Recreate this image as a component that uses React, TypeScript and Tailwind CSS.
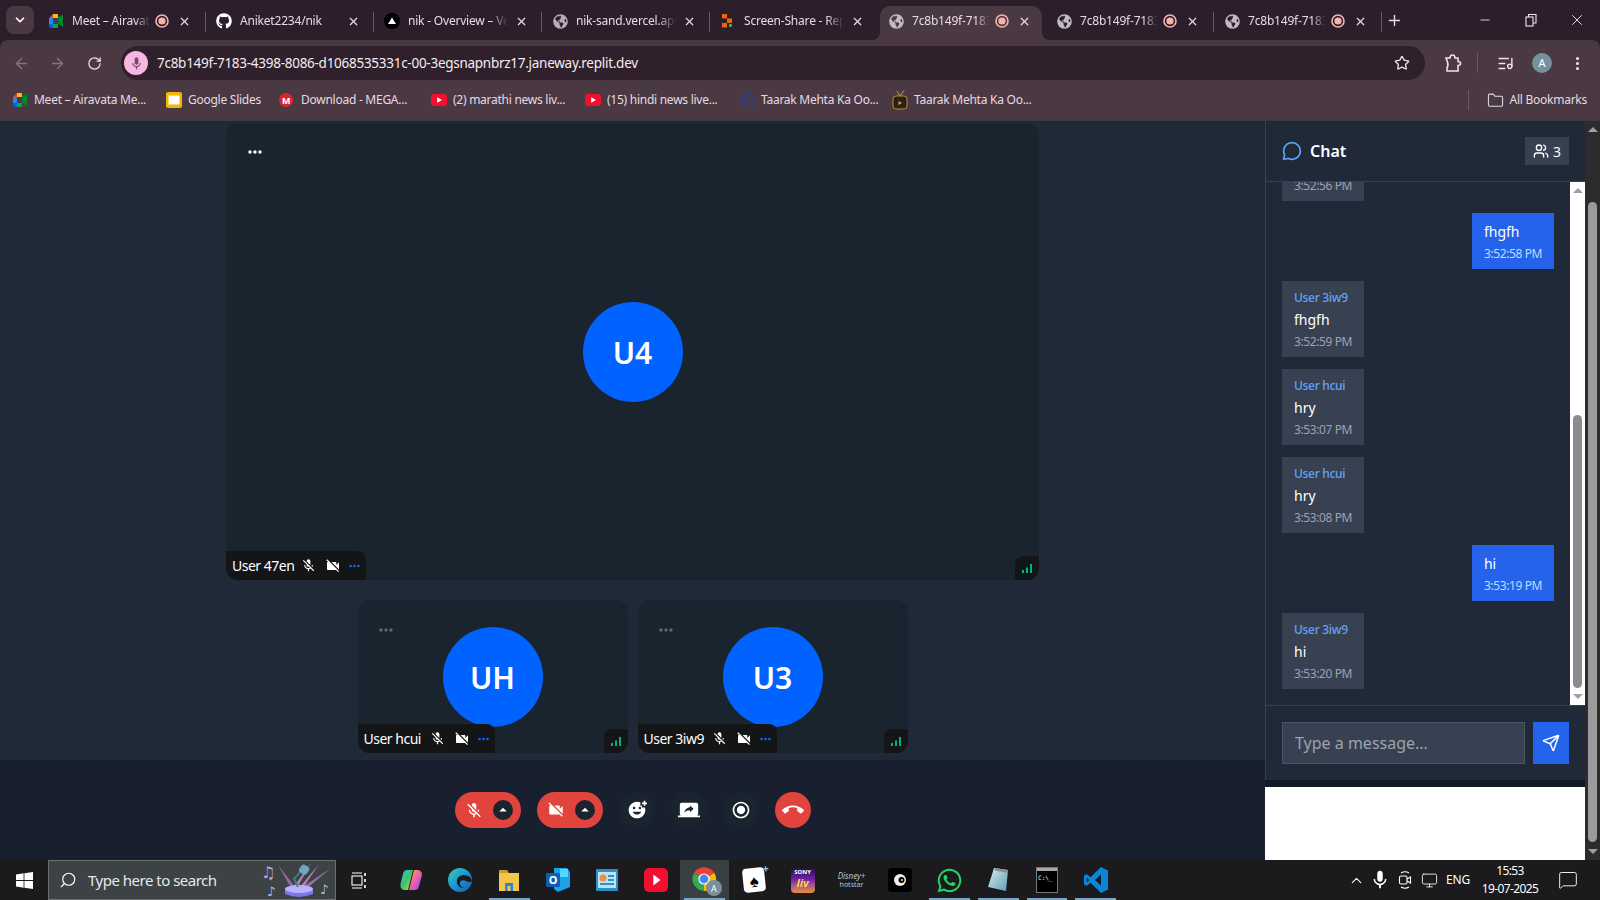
import React from 'react';
import {
  ArrowLeft,
  ArrowRight,
  ChevronDown,
  ChevronUp,
  Folder,
  ListMusic,
  MessageCircle,
  MessageSquare,
  Minus,
  Monitor,
  MoreVertical,
  Plus,
  RotateCw,
  Search,
  Send,
  Star,
  Users,
  X,
} from 'lucide-react';
import { FaGithub, FaGlobeAmericas, FaWhatsapp } from 'react-icons/fa';
import {
  MdAddReaction,
  MdArrowDropUp,
  MdCallEnd,
  MdMic,
  MdMicOff,
  MdRadioButtonChecked,
  MdScreenShare,
  MdVideocamOff,
} from 'react-icons/md';

const uiFont = "font-['Noto_Sans','Open_Sans',sans-serif]";

// ---- little logos ----

function MeetIcon({ size = 16 }: { size?: number }) {
  return (
    <svg width={size} height={size} viewBox="0 0 16 16">
      <path d="M1 5 L5 1 H10 V5 H5 V11 H1 Z" fill="#ea4335" />
      <path d="M5 1 H10 V5 H5 Z" fill="#fbbc04" />
      <path d="M1 5 H5 V11 H1 Z" fill="#2684fc" />
      <path d="M1 11 H5 V15 H3 Q1 15 1 13 Z" fill="#0066da" />
      <path d="M5 11 H10 V15 H5 Z" fill="#00ac47" />
      <path d="M10 4 L15 1.5 V14 L10 11 Z" fill="#00832d" />
      <path d="M5 5 H10 V11 H5 Z" fill="#4a3843" />
    </svg>
  );
}

function VercelIcon() {
  return (
    <svg width="16" height="16" viewBox="0 0 16 16">
      <circle cx="8" cy="8" r="8" fill="#000" />
      <path d="M8 4.5 L12 11 H4 Z" fill="#fff" />
    </svg>
  );
}

function ReplitIcon() {
  return (
    <svg width="16" height="16" viewBox="0 0 16 16">
      <rect x="2" y="1" width="5" height="4.5" fill="#f26207" />
      <rect x="7" y="5.5" width="5" height="4.5" fill="#f26207" />
      <rect x="2" y="10" width="5" height="4.5" fill="#f26207" />
      <rect x="9" y="11" width="3" height="3" rx="1" fill="#3fb950" />
    </svg>
  );
}

function RecIcon() {
  return (
    <svg width="14" height="14" viewBox="0 0 14 14">
      <circle cx="7" cy="7" r="6" fill="none" stroke="#f8b4ac" strokeWidth="1.6" />
      <circle cx="7" cy="7" r="3.6" fill="#f8b4ac" />
    </svg>
  );
}

function YoutubeIcon({ w = 16, h = 12 }: { w?: number; h?: number }) {
  return (
    <svg width={w} height={h} viewBox="0 0 16 12" preserveAspectRatio="none">
      <rect width="16" height="12" rx="3" fill="#f50f2f" />
      <path d="M6.2 3.2 L11 6 L6.2 8.8 Z" fill="#fff" />
    </svg>
  );
}

function SlidesIcon() {
  return (
    <svg width="16" height="16" viewBox="0 0 16 16">
      <rect width="16" height="16" rx="2" fill="#f4b400" />
      <rect x="2.5" y="3.5" width="11" height="9" fill="#fff" />
    </svg>
  );
}

function MegaIcon() {
  return (
    <span className="flex h-[14px] w-[14px] items-center justify-center rounded-full bg-[#d9272e] text-[9px] font-bold leading-none text-white">
      M
    </span>
  );
}

function TempleIcon() {
  return (
    <svg width="16" height="18" viewBox="0 0 16 18" fill="none" stroke="#27408f" strokeWidth="1.1">
      <path d="M1 7 L8 1 L15 7" />
      <path d="M3 7 V17 M6 5 V17 M10 5 V17 M13 7 V17" />
    </svg>
  );
}

function TvIcon() {
  return (
    <svg width="16" height="20" viewBox="0 0 16 20">
      <path d="M5 1 L8 6 L12 0.5" stroke="#c08a2c" strokeWidth="1.2" fill="none" />
      <rect x="1" y="6" width="14" height="13" rx="3" fill="#2a2118" stroke="#c08a2c" />
      <path d="M6.5 11 L10 13 L6.5 15 Z" fill="#e0a030" />
    </svg>
  );
}

function PuzzleIcon() {
  return (
    <svg width="18" height="20" viewBox="0 0 18 20" fill="none" stroke="#f1dfe8" strokeWidth="1.6">
      <path d="M2 5 H6 Q6 2 8.5 2 Q11 2 11 5 H14 V8.5 Q16.5 8.5 16.5 10.5 Q16.5 12.5 14 12.5 V18 H3 V15 Q4.5 13 3.5 9 Z" />
    </svg>
  );
}

function WindowsLogo() {
  return (
    <svg width="17" height="17" viewBox="0 0 17 17" fill="#fff">
      <path d="M0 2.4 L7.6 1.3 V8 H0 Z" />
      <path d="M8.4 1.2 L17 0 V8 H8.4 Z" />
      <path d="M0 9 H7.6 V15.7 L0 14.6 Z" />
      <path d="M8.4 9 H17 V17 L8.4 15.8 Z" />
    </svg>
  );
}

function SearchArt() {
  return (
    <svg width="72" height="36" viewBox="0 0 72 36">
      <path d="M17 3 L30 26 L35 26 Z" fill="#a16fb0" opacity="0.85" />
      <path d="M58 2 L42 26 L38 26 Z" fill="#c487c4" opacity="0.9" />
      <path d="M70 6 L44 28 L40 26 Z" fill="#b073b6" opacity="0.85" />
      <path d="M50 1 L36 26 L33 24 Z" fill="#d39ad0" opacity="0.75" />
      <path d="M24 27 Q38 33 52 27 V32 Q38 38 24 32 Z" fill="#7a78f0" />
      <ellipse cx="38" cy="27" rx="14" ry="4" fill="#b9b4ff" />
      <path d="M37 25 L33 17 L40 9" stroke="#3f7f8c" strokeWidth="1.8" fill="none" />
      <rect x="39" y="3" width="9" height="9" rx="3" transform="rotate(35 43 7)" fill="#6fa6bd" />
      <text x="0" y="16" fontSize="16" fill="#c6a2e8" fontFamily="DejaVu Sans">♫</text>
      <text x="6" y="34" fontSize="13" fill="#a7c0f0" fontFamily="DejaVu Sans">♪</text>
      <text x="59" y="32" fontSize="13" fill="#a7c0f0" fontFamily="DejaVu Sans">♪</text>
    </svg>
  );
}

function CopilotIcon() {
  return (
    <svg width="24" height="24" viewBox="0 0 24 24">
      <defs>
        <linearGradient id="cpa" x1="0" y1="0" x2="1" y2="1">
          <stop offset="0" stopColor="#36c0e8" />
          <stop offset="0.5" stopColor="#36c46c" />
          <stop offset="1" stopColor="#f3d23a" />
        </linearGradient>
        <linearGradient id="cpb" x1="0" y1="0" x2="1" y2="1">
          <stop offset="0" stopColor="#ffb347" />
          <stop offset="0.5" stopColor="#ef5da8" />
          <stop offset="1" stopColor="#6a5cf0" />
        </linearGradient>
      </defs>
      <path d="M8 2 H14 L9 22 H6 Q1 22 1.5 16 L4 6 Q5 2 8 2 Z" fill="url(#cpa)" />
      <path d="M10 22 H16 Q19 22 20 18 L23 7 Q23 2 18 2 H15 Z" fill="url(#cpb)" />
    </svg>
  );
}

function EdgeIcon() {
  return (
    <svg width="24" height="24" viewBox="0 0 24 24">
      <defs>
        <linearGradient id="edg" x1="0" y1="0" x2="1" y2="1">
          <stop offset="0" stopColor="#36d1b0" />
          <stop offset="0.55" stopColor="#1a8fd8" />
          <stop offset="1" stopColor="#0b5fa8" />
        </linearGradient>
      </defs>
      <circle cx="12" cy="12" r="12" fill="url(#edg)" />
      <path d="M24 13 Q23 7 15 7 Q8 8 9 15 Q10 20 16 20 Q11 18 12 14 Q14 11 18 13 Q21 15 24 13 Z" fill="#1b1a1c" />
    </svg>
  );
}

function ExplorerIcon() {
  return (
    <svg width="22" height="24" viewBox="0 0 22 24">
      <path d="M1 2 H9 L11 5 H1 Z" fill="#c99a2e" />
      <rect x="1" y="5" width="20" height="18" fill="#f4c64a" />
      <path d="M7 23 V15 H15 V23 H12.5 V18 H9.5 V23 Z" fill="#2b86d9" />
    </svg>
  );
}

function OutlookIcon() {
  return (
    <svg width="24" height="26" viewBox="0 0 24 26">
      <path d="M8 1 H21 L24 5 V20 L12 25 L8 22 Z" fill="#1aa3e8" />
      <path d="M14 2 H22 V10 H14 Z" fill="#50d9ff" />
      <rect x="0" y="6" width="14" height="14" rx="1" fill="#0f5db5" />
      <text x="7" y="17" fontSize="11" fontWeight="700" fill="#fff" textAnchor="middle" fontFamily="Noto Sans">O</text>
    </svg>
  );
}

function WidgetsIcon() {
  return (
    <svg width="22" height="22" viewBox="0 0 22 22">
      <rect width="22" height="22" rx="1" fill="#2f8fc7" />
      <rect x="2" y="3" width="18" height="16" fill="#bfe3f5" />
      <circle cx="7" cy="9" r="3.5" fill="#e8903c" />
      <rect x="12" y="6" width="6" height="2" fill="#2f8fc7" />
      <rect x="12" y="10" width="6" height="2" fill="#2f8fc7" />
      <rect x="4" y="14" width="14" height="2" fill="#2f8fc7" />
    </svg>
  );
}

function ChromeIcon() {
  return (
    <span className="relative block h-[26px] w-[26px]">
      <svg width="24" height="24" viewBox="0 0 24 24">
        <path d="M12 12 L2 6 A12 12 0 0 1 22.4 6 Z" fill="#ea4335" />
        <path d="M12 12 L22.4 6 A12 12 0 0 1 12 24 Z" fill="#fbbc04" />
        <path d="M12 12 L12 24 A12 12 0 0 1 2 6 Z" fill="#34a853" />
        <circle cx="12" cy="12" r="5.6" fill="#fff" />
        <circle cx="12" cy="12" r="4.4" fill="#4285f4" />
      </svg>
      <span className="absolute bottom-[-3px] right-[-4px] flex h-4 w-4 items-center justify-center rounded-full bg-[#78909c] text-[9px] leading-none text-white">
        A
      </span>
    </span>
  );
}

function SolitaireIcon() {
  return (
    <span className="relative flex h-[24px] w-[22px] rotate-[-6deg] items-center justify-center rounded-sm bg-white text-[17px] leading-none text-black">
      ♠
      <span className="absolute right-[-5px] top-[-4px] text-[11px] font-bold leading-none text-[#7fd0f5]">+</span>
    </span>
  );
}

function SonyLivIcon() {
  return (
    <span className="flex h-[26px] w-[24px] flex-col items-center overflow-hidden rounded-sm bg-gradient-to-b from-[#1a1040] via-[#7a1fa8] to-[#f08a24] text-white">
      <span className="text-[6px] font-bold leading-[10px]">SONY</span>
      <span className="text-[11px] font-bold italic leading-[12px] text-[#ffd23f]">liv</span>
    </span>
  );
}

function HotstarIcon() {
  return (
    <span className="flex flex-col items-center text-[#b9c3cc]">
      <span className="text-[8px] italic leading-[9px]">Disney+</span>
      <span className="text-[7px] leading-[9px]">hotstar</span>
    </span>
  );
}

function CrunchIcon() {
  return (
    <span className="flex h-[24px] w-[24px] items-center justify-center rounded-[4px] bg-black">
      <svg width="14" height="14" viewBox="0 0 14 14">
        <circle cx="7" cy="7" r="6" fill="#eee" />
        <circle cx="8.5" cy="7" r="3" fill="#000" />
        <circle cx="9" cy="7" r="1.2" fill="#e8903c" />
      </svg>
    </span>
  );
}

function NotepadIcon() {
  return (
    <svg width="24" height="26" viewBox="0 0 24 26">
      <defs>
        <linearGradient id="npd" x1="0" y1="0" x2="1" y2="1">
          <stop offset="0" stopColor="#d8ecef" />
          <stop offset="1" stopColor="#5f9fb5" />
        </linearGradient>
      </defs>
      <path d="M8 1 L22 3 L20 24 L2 20 Z" fill="url(#npd)" />
      <path d="M9 1 L22 3 L21.6 6 L8.6 3.6 Z" fill="#8b8f92" />
    </svg>
  );
}

function TerminalIcon() {
  return (
    <span className="flex h-[26px] w-[22px] flex-col overflow-hidden border border-[#777] bg-black font-['DejaVu_Sans_Mono',monospace] text-[6px] leading-[10px] text-white">
      <span className="h-[3px] bg-[#aaa]" />
      <span className="pl-[1px] pt-[2px]">C:\_</span>
    </span>
  );
}

function VscodeIcon() {
  return (
    <svg width="24" height="26" viewBox="0 0 24 26">
      <path d="M17 0 L24 3.5 V22.5 L17 26 L6.5 15.8 L2.5 19 L0 17.5 V8.5 L2.5 7 L6.5 10.2 Z M17 7.5 L11 13 L17 18.5 Z M2.8 10.4 V15.6 L5.4 13 Z" fill="#0a86d8" fillRule="evenodd" />
    </svg>
  );
}

function TrayCamera() {
  return (
    <svg width="14" height="20" viewBox="0 0 14 20" fill="none" stroke="#fff" strokeWidth="1.1">
      <path d="M3 3 Q7 0.5 11 3" />
      <rect x="1.5" y="6" width="7.5" height="8" rx="1.5" />
      <path d="M9 9 L12.5 7 V13 L9 11" />
      <path d="M3 17 Q7 19.5 11 17" />
    </svg>
  );
}

function Dots({ className = '', width = 14 }: { className?: string; width?: number }) {
  return (
    <svg width={width} height="4" viewBox="0 0 14 4" className={className} fill="currentColor">
      <circle cx="2" cy="2" r="1.7" />
      <circle cx="7" cy="2" r="1.7" />
      <circle cx="12" cy="2" r="1.7" />
    </svg>
  );
}

// ---- browser chrome ----

type TabInfo = {
  title: string;
  icon: React.ReactNode;
  rec?: boolean;
  active?: boolean;
  noSep?: boolean;
};

const tabs: TabInfo[] = [
  { title: 'Meet – Airavata Meet', icon: <MeetIcon />, rec: true },
  { title: 'Aniket2234/nik', icon: <FaGithub size={16} color="#fff" /> },
  { title: 'nik - Overview – Vercel', icon: <VercelIcon /> },
  { title: 'nik-sand.vercel.app', icon: <FaGlobeAmericas size={15} color="#b9adb5" /> },
  { title: 'Screen-Share - Replit', icon: <ReplitIcon />, noSep: true },
  { title: '7c8b149f-7183-4398', icon: <FaGlobeAmericas size={15} color="#c4bac2" />, rec: true, active: true },
  { title: '7c8b149f-7183-4398', icon: <FaGlobeAmericas size={15} color="#c4bac2" />, rec: true },
  { title: '7c8b149f-7183-4398', icon: <FaGlobeAmericas size={15} color="#c4bac2" />, rec: true },
];

function Tab({ tab }: { tab: TabInfo }) {
  const inner = (
    <>
      <span className="flex w-4 shrink-0 justify-center">{tab.icon}</span>
      <span
        className={`ml-2 overflow-hidden whitespace-nowrap text-[12px] tracking-[-0.2px] text-[#e6dbe2] [mask-image:linear-gradient(to_right,black_82%,transparent)] ${
          tab.rec ? 'w-[78px]' : 'w-[100px]'
        }`}
      >
        {tab.title}
      </span>
      {tab.rec && (
        <span className="ml-[2px] flex w-[19px] justify-center">
          <RecIcon />
        </span>
      )}
      <X size={13} strokeWidth={2.2} className="ml-[7px] shrink-0 text-[#e6dbe2]" />
    </>
  );

  if (tab.active) {
    return (
      <div className="relative mr-[6px] flex h-[34px] w-[162px] items-center rounded-t-[10px] bg-[#4a3843] pb-1 pl-2">
        <span className="absolute bottom-0 left-[-8px] h-2 w-2 bg-[radial-gradient(circle_at_0_0,transparent_8px,#4a3843_8px)]" />
        <span className="absolute bottom-0 right-[-8px] h-2 w-2 bg-[radial-gradient(circle_at_100%_0,transparent_8px,#4a3843_8px)]" />
        {inner}
      </div>
    );
  }
  return (
    <div className="relative flex h-[34px] w-[168px] items-center pb-1 pl-2">
      {inner}
      {!tab.noSep && <span className="absolute right-[2px] top-[6px] h-5 w-px bg-[#6a5964]" />}
    </div>
  );
}

function TabStrip() {
  return (
    <div className="flex h-10 items-start bg-[#2c1e2b]">
      <div className="ml-[6px] mr-[6px] mt-[6px] flex h-7 w-7 items-center justify-center rounded-lg bg-[#4a3843]">
        <ChevronDown size={14} strokeWidth={3} color="#fff" />
      </div>
      <div className="flex pt-[6px]">
        {tabs.map((tab, i) => (
          <Tab key={i} tab={tab} />
        ))}
      </div>
      <Plus size={17} strokeWidth={2} className="ml-[2px] mt-3 text-[#e6dbe2]" />
      <div className="ml-auto flex h-10 items-center text-[#f1e8ed]">
        <span className="flex w-[46px] justify-center">
          <Minus size={14} strokeWidth={1.5} />
        </span>
        <span className="flex w-[46px] justify-center">
          <svg width="12" height="14" viewBox="0 0 12 14" fill="none" stroke="currentColor" strokeWidth="1.1">
            <rect x="1" y="4" width="7" height="9" />
            <path d="M3.5 4 V1.5 H11 V10 H8" />
          </svg>
        </span>
        <span className="flex w-[46px] justify-center">
          <X size={18} strokeWidth={1.2} />
        </span>
      </div>
    </div>
  );
}

function Toolbar() {
  return (
    <div className="flex h-10 items-center rounded-t-lg bg-[#4a3843] pt-[6px] text-[#f1dfe8]">
      <ArrowLeft size={17} className="ml-[13px] text-[#85747f]" />
      <ArrowRight size={17} className="ml-[19px] text-[#85747f]" />
      <RotateCw size={15} strokeWidth={2} className="ml-[21px]" />
      <div className="ml-[19px] flex h-[34px] w-[1304px] items-center rounded-full bg-[#2f202c] pl-[3px]">
        <span className="flex h-6 w-6 items-center justify-center rounded-full bg-[#f6b7e3]">
          <MdMic size={15} color="#7a4a6c" />
        </span>
        <span className="ml-[9px] text-[13.5px] tracking-[-0.27px] text-[#f4ecf1]">
          7c8b149f-7183-4398-8086-d1068535331c-00-3egsnapnbrz17.janeway.replit.dev
        </span>
        <Star size={16} strokeWidth={2} className="ml-auto mr-[15px]" />
      </div>
      <span className="ml-[19px]">
        <PuzzleIcon />
      </span>
      <span className="ml-[15px] h-5 w-px bg-[#6a5964]" />
      <ListMusic size={17} className="ml-[19px]" />
      <span className="ml-[18px] flex h-5 w-5 items-center justify-center rounded-full bg-[#78909c] text-[11px] text-white">
        A
      </span>
      <MoreVertical size={17} strokeWidth={2.4} className="ml-[17px]" />
    </div>
  );
}

const bookmarks = [
  { label: 'Meet – Airavata Me...', icon: <MeetIcon />, width: 'w-[154px]' },
  { label: 'Google Slides', icon: <SlidesIcon />, width: 'w-[113px]' },
  { label: 'Download - MEGA...', icon: <MegaIcon />, width: 'w-[152px]' },
  { label: '(2) marathi news liv...', icon: <YoutubeIcon />, width: 'w-[154px]' },
  { label: '(15) hindi news live...', icon: <YoutubeIcon />, width: 'w-[154px]' },
  { label: 'Taarak Mehta Ka Oo...', icon: <TempleIcon />, width: 'w-[153px]' },
  { label: 'Taarak Mehta Ka Oo...', icon: <TvIcon />, width: 'w-[150px]' },
];

function BookmarksBar() {
  return (
    <div className="flex h-[41px] items-center border-b border-[#3a3a42] bg-[#4a3843] pl-3 text-[12px] tracking-[-0.26px] text-[#e6dbe2]">
      {bookmarks.map((b, i) => (
        <div key={i} className={`flex items-center ${b.width}`}>
          <span className="flex w-4 shrink-0 justify-start">{b.icon}</span>
          <span className="ml-[6px] whitespace-nowrap">{b.label}</span>
        </div>
      ))}
      <span className="ml-auto h-5 w-px bg-[#6a5964]" />
      <Folder size={17} strokeWidth={1.5} className="ml-[18px]" />
      <span className="ml-[6px] mr-[13px] whitespace-nowrap">All Bookmarks</span>
    </div>
  );
}

// ---- meeting ----

function SignalBadge() {
  return (
    <div className="absolute bottom-0 right-0 flex h-6 w-6 items-center justify-center rounded-tl-lg rounded-br-xl bg-[#131517]">
      <svg width="10" height="9" viewBox="0 0 10 9" fill="#00b386">
        <rect x="0" y="6" width="2" height="3" />
        <rect x="4" y="3.5" width="2" height="5.5" />
        <rect x="8" y="0" width="2" height="9" />
      </svg>
    </div>
  );
}

function NameTag({ name, gap }: { name: string; gap: string }) {
  return (
    <div className="absolute bottom-0 left-0 flex h-[29px] items-center rounded-tr-lg rounded-bl-xl bg-[#131517] px-[6px] text-white">
      <span className={`whitespace-nowrap text-[14px] tracking-[-0.5px] ${gap}`}>{name}</span>
      <MdMicOff size={15} />
      <MdVideocamOff size={16} className="ml-[9px]" />
      <Dots width={11} className="ml-2 text-[#0b66ff]" />
    </div>
  );
}

function Tile({
  initials,
  name,
  size,
  dim,
  gap,
}: {
  initials: string;
  name: string;
  size: string;
  dim?: boolean;
  gap: string;
}) {
  return (
    <div className={`relative flex items-center justify-center rounded-xl bg-[#1a242e] ${size}`}>
      <div className="flex h-[100px] w-[100px] items-center justify-center rounded-full bg-[#0062ff] pt-px text-[30px] font-semibold text-white">
        {initials}
      </div>
      <div className={`absolute ${dim ? 'left-[21px] top-[28px] text-[#5f6770]' : 'left-[22px] top-[27px] text-white'}`}>
        <Dots />
      </div>
      <NameTag name={name} gap={gap} />
      <SignalBadge />
    </div>
  );
}

function SplitButton({ icon }: { icon: React.ReactNode }) {
  return (
    <div className="flex h-9 w-[66px] items-center rounded-full bg-[#e0443c] pl-[10px] text-white">
      <span className="flex w-[18px] justify-center">{icon}</span>
      <span className="ml-[10px] flex h-5 w-5 items-center justify-center rounded-full bg-[#1a242e]">
        <MdArrowDropUp size={18} />
      </span>
    </div>
  );
}

function RoundButton({ icon, danger }: { icon: React.ReactNode; danger?: boolean }) {
  return (
    <div
      className={`flex h-9 w-9 items-center justify-center rounded-full text-white ${
        danger ? 'bg-[#e0443c]' : 'bg-[#1a242e]'
      }`}
    >
      {icon}
    </div>
  );
}

function Meeting() {
  return (
    <div className="flex w-[1265px] flex-col">
      <div className="flex h-[639px] flex-col items-center gap-5 bg-[#1f2937] pt-[2px]">
        <Tile initials="U4" name="User 47en" size="h-[457px] w-[813px]" gap="mr-[7px]" />
        <div className="flex gap-[10px]">
          <Tile initials="UH" name="User hcui" size="h-[153px] w-[270px]" dim gap="mr-[9px]" />
          <Tile initials="U3" name="User 3iw9" size="h-[153px] w-[270px]" dim gap="mr-2" />
        </div>
      </div>
      <div className="flex h-[100px] justify-center gap-4 bg-[#182030] pt-8">
        <SplitButton icon={<MdMicOff size={19} />} />
        <SplitButton icon={<MdVideocamOff size={20} />} />
        <RoundButton icon={<MdAddReaction size={20} />} />
        <RoundButton icon={<MdScreenShare size={22} />} />
        <RoundButton icon={<MdRadioButtonChecked size={20} />} />
        <RoundButton danger icon={<MdCallEnd size={22} />} />
      </div>
    </div>
  );
}

// ---- chat ----

// the list is scrolled: only the end of the 3:52:56 bubble still shows at the top
const messages = [
  { time: '3:52:56 PM' },
  { own: true, text: 'fhgfh', time: '3:52:58 PM' },
  { user: 'User 3iw9', text: 'fhgfh', time: '3:52:59 PM' },
  { user: 'User hcui', text: 'hry', time: '3:53:07 PM' },
  { user: 'User hcui', text: 'hry', time: '3:53:08 PM' },
  { own: true, text: 'hi', time: '3:53:19 PM' },
  { user: 'User 3iw9', text: 'hi', time: '3:53:20 PM' },
];

function Bubble({ user, text, time, own }: { user?: string; text?: string; time: string; own?: boolean }) {
  return (
    <div className={`shrink-0 px-3 pb-[7px] pt-[9px] ${own ? 'self-end bg-[#2563eb]' : 'self-start bg-[#374151]'}`}>
      {user && <div className="mb-1 text-[12px] font-medium leading-4 tracking-[-0.3px] text-[#60a5fa]">{user}</div>}
      {text && <div className="mb-1 text-[14px] leading-5 text-white">{text}</div>}
      <div className={`text-[12px] leading-4 tracking-[-0.4px] ${own ? 'text-[#bfdbfe]' : 'text-[#9ca3af]'}`}>
        {time}
      </div>
    </div>
  );
}

function Arrow({ up, color }: { up?: boolean; color: string }) {
  return (
    <div
      className={`h-0 w-0 border-x-[5px] border-x-transparent ${up ? 'border-b-[5px]' : 'border-t-[5px]'} ${color}`}
    />
  );
}

function ChatPanel() {
  return (
    <div className="flex w-80 flex-col">
      <div className="flex h-[659px] flex-col border-l border-[#374151] bg-[#1f2937]">
        <div className="flex h-[61px] shrink-0 items-center border-b border-[#374151] px-4 text-white">
          <MessageCircle size={20} color="#60a5fa" />
          <span className="ml-2 text-[16px] font-semibold">Chat</span>
          <div className="ml-auto flex h-7 items-center gap-1 bg-[#374151] px-2 text-[14px]">
            <Users size={16} />3
          </div>
        </div>
        <div className="flex min-h-0 flex-1">
          <div className="flex min-w-0 flex-1 flex-col justify-end gap-3 overflow-hidden px-4 pb-4">
            {messages.map((m, i) => (
              <Bubble key={i} {...m} />
            ))}
          </div>
          <div className="flex w-[15px] flex-col items-center bg-white py-[6px]">
            <Arrow up color="border-b-[#a0a0a0]" />
            <div className="mt-[222px] h-[273px] w-[9px] rounded-full bg-[#8c8c8c]" />
            <div className="mt-auto">
              <Arrow color="border-t-[#a0a0a0]" />
            </div>
          </div>
        </div>
        <div className="flex shrink-0 gap-2 border-t border-[#374151] p-4">
          <input
            readOnly
            placeholder="Type a message..."
            className="h-[42px] min-w-0 flex-1 border border-[#4b5563] bg-[#374151] px-3 text-[16px] text-white placeholder:text-[#9ca3af]"
          />
          <div className="flex h-[42px] w-9 shrink-0 items-center justify-center bg-[#2563eb] text-white">
            <Send size={18} />
          </div>
        </div>
      </div>
      <div className="h-[7px] bg-[#111827]" />
      <div className="flex-1 bg-white" />
    </div>
  );
}

function PageScrollbar() {
  return (
    <div className="flex w-[15px] flex-col items-center bg-[#2c2c2c] py-[6px]">
      <Arrow up color="border-b-[#a0a0a0]" />
      <div className="mt-[70px] h-[640px] w-[9px] rounded-full bg-[#9b9b9b]" />
      <div className="mt-auto">
        <Arrow color="border-t-[#a0a0a0]" />
      </div>
    </div>
  );
}

// ---- windows taskbar ----

const taskIcons: { icon: React.ReactNode; open?: boolean; active?: boolean }[] = [
  { icon: <CopilotIcon /> },
  { icon: <EdgeIcon /> },
  { icon: <ExplorerIcon />, open: true },
  { icon: <OutlookIcon /> },
  { icon: <WidgetsIcon /> },
  { icon: <YoutubeIcon w={24} h={24} /> },
  { icon: <ChromeIcon />, open: true, active: true },
  { icon: <SolitaireIcon /> },
  { icon: <SonyLivIcon /> },
  { icon: <HotstarIcon /> },
  { icon: <CrunchIcon /> },
  { icon: <FaWhatsapp size={27} color="#25d366" />, open: true },
  { icon: <NotepadIcon />, open: true },
  { icon: <TerminalIcon />, open: true },
  { icon: <VscodeIcon />, open: true },
];

function Taskbar() {
  return (
    <div className="flex h-10 items-center bg-[#1b1a1c] text-white">
      <div className="flex w-12 justify-center">
        <WindowsLogo />
      </div>
      <div className="flex h-10 w-[288px] items-center border border-[#6b7073] bg-[#3d4245] pl-[10px]">
        <Search size={18} strokeWidth={1.5} className="-scale-x-100" />
        <span className="ml-[11px] whitespace-nowrap text-[15px] tracking-[-0.5px] text-[#e8e8e8]">
          Type here to search
        </span>
        <span className="ml-auto mr-[2px]">
          <SearchArt />
        </span>
      </div>
      <div className="flex w-[47px] justify-center pr-[2px]">
        <svg width="16" height="17" viewBox="0 0 16 17" fill="none" stroke="#fff" strokeWidth="1.1">
          <path d="M1 1 H11 M1 16 H11" />
          <rect x="1" y="4" width="10" height="9" />
          <path d="M14 1 V4 M14 7 V10 M14 13 V16" strokeWidth="1.6" />
        </svg>
      </div>
      <div className="ml-1 flex">
        {taskIcons.map((t, i) => (
          <div
            key={i}
            className={`relative flex h-10 w-[48.9px] items-center justify-center ${t.active ? 'bg-[#3a3f42]' : ''}`}
          >
            {t.icon}
            {t.open && <span className="absolute bottom-0 left-[4px] right-[4px] h-[2px] bg-[#76a7c4]" />}
          </div>
        ))}
      </div>
      <div className="ml-auto flex items-center">
        <ChevronUp size={17} strokeWidth={1.5} />
        <MdMic size={22} className="ml-1" />
        <span className="ml-[7px]">
          <TrayCamera />
        </span>
        <Monitor size={17} strokeWidth={1.2} className="ml-[9px]" />
        <span className="ml-2 text-[12px] tracking-[-0.2px]">ENG</span>
        <div className="ml-[11px] flex w-[58px] flex-col items-center whitespace-nowrap text-[12px] leading-[18px] tracking-[-0.6px]">
          <span>15:53</span>
          <span>19-07-2025</span>
        </div>
        <MessageSquare size={20} strokeWidth={1.1} className="ml-[19px] mr-[22px]" />
      </div>
    </div>
  );
}

export default function App() {
  return (
    <div className={`flex h-[900px] w-[1600px] flex-col overflow-hidden bg-[#2c1e2b] ${uiFont}`}>
      <TabStrip />
      <Toolbar />
      <BookmarksBar />
      <div className="flex h-[739px]">
        <Meeting />
        <ChatPanel />
        <PageScrollbar />
      </div>
      <Taskbar />
    </div>
  );
}
